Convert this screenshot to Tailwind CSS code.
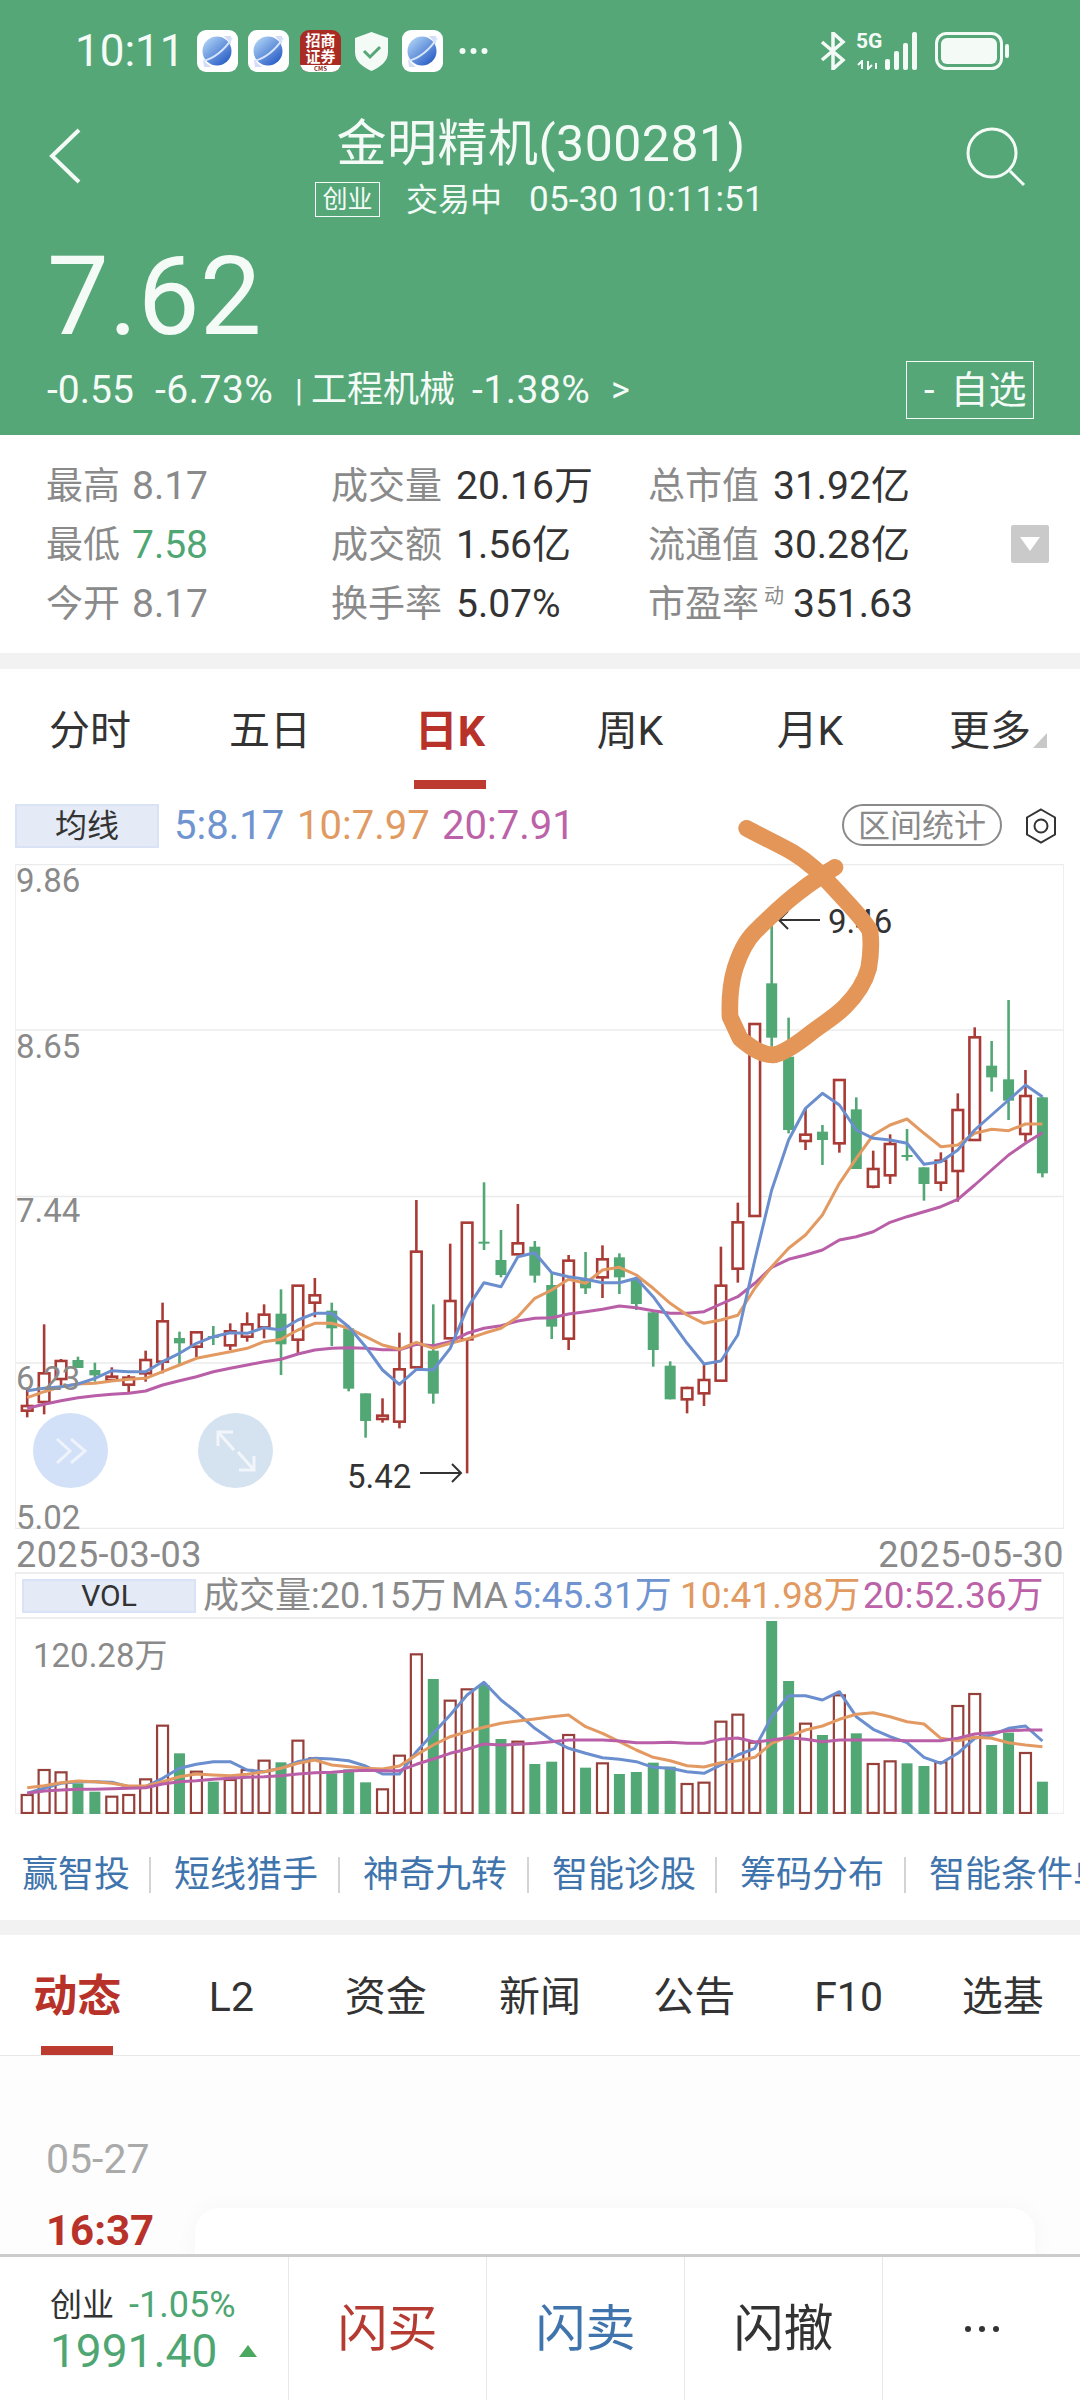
<!DOCTYPE html>
<html lang="zh">
<head>
    <meta charset="UTF-8">
    <title>金明精机(300281)</title>
    <script src="https://cdn.jsdelivr.net/npm/@tailwindcss/browser@4"></script>
</head>
<body class="relative w-[1080px] h-[2400px] overflow-hidden bg-white text-[#333333] font-['Roboto','Noto_Sans_CJK_SC',sans-serif]">

    <svg class="absolute w-0 h-0">
        <defs>
            <linearGradient id="planet" x1="0.15" y1="0.1" x2="0.85" y2="0.9">
                <stop offset="0" stop-color="#a8cdf3"/>
                <stop offset="1" stop-color="#2b5fc7"/>
            </linearGradient>
            <symbol id="browser" viewBox="0 0 41 42">
                <rect width="41" height="42" rx="9" fill="#ffffff"/>
                <path d="M27 6h7v8zM6 30l8 7h-7z" fill="#d5dcf8"/>
                <circle cx="20" cy="21" r="14.5" fill="url(#planet)"/>
                <path d="M6 31C16 29 28 20 35 8" fill="none" stroke="#d6e5fb" stroke-width="2"/>
            </symbol>
        </defs>
    </svg>

    <!-- header -->
    <header class="h-[435px] bg-[#55a778] text-[#f4fbf7]">
        <div class="h-[100px] flex items-center pl-[75px] pr-[71px] pt-[2px]">
            <span class="text-[44px] leading-none w-[122px]">10:11</span>
            <svg class="w-[41px] h-[42px]"><use href="#browser"/></svg>
            <svg class="w-[41px] h-[42px] ml-[10px]"><use href="#browser"/></svg>
            <div class="w-[41px] h-[42px] ml-[11px] rounded-[9px] overflow-hidden flex flex-col items-center bg-[#a92b22] font-['Noto_Sans_CJK_SC',serif] font-bold text-white">
                <div class="w-[32px] h-[35px] pt-[2px] text-center text-[15px] leading-[16px] break-all">招商证券</div>
                <div class="w-full h-[7px] bg-white text-[#8c2a22] text-[6px] leading-[7px] text-center">CMS</div>
            </div>
            <svg class="w-[33px] h-[39px] ml-[14px]" viewBox="0 0 33 39"><path d="M16.5 0L33 6v14c0 10-8 15-16.5 19C8 35 0 30 0 20V6z" fill="#f4fbf7"/><path d="M9 19l6 6 10-10" fill="none" stroke="#55a778" stroke-width="3"/></svg>
            <svg class="w-[41px] h-[42px] ml-[14px]"><use href="#browser"/></svg>
            <svg class="w-[29px] h-[8px] ml-[16px]" viewBox="0 0 29 8"><circle cx="3.5" cy="4" r="3" fill="#f4fbf7"/><circle cx="14.5" cy="4" r="3" fill="#f4fbf7"/><circle cx="25.5" cy="4" r="3" fill="#f4fbf7"/></svg>
            <svg class="w-[26px] h-[38px] ml-auto" viewBox="0 0 26 38"><path d="M2 10l21 18-10 9V1l10 9L2 28" fill="none" stroke="#f4fbf7" stroke-width="3.5"/></svg>
            <div class="relative w-[28px] h-[38px] ml-[10px] text-[21px] leading-[19px] font-bold">5G
                <svg class="absolute left-0 bottom-0 w-[26px] h-[10px]" viewBox="0 0 26 10"><path d="M6 9V1L2 5M12 1v8l4-4M20 3v6" fill="none" stroke="#f4fbf7" stroke-width="2"/></svg>
            </div>
            <svg class="w-[34px] h-[38px]" viewBox="0 0 34 38"><rect x="1" y="27" width="5" height="11" rx="2" fill="#f4fbf7"/><rect x="10" y="19" width="5" height="19" rx="2" fill="#f4fbf7"/><rect x="19" y="11" width="5" height="27" rx="2" fill="#f4fbf7"/><rect x="28" y="0" width="5" height="38" rx="2" fill="#f4fbf7"/></svg>
            <svg class="w-[74px] h-[38px] ml-[17px]" viewBox="0 0 74 38"><rect x="1.5" y="1.5" width="65" height="35" rx="10" fill="none" stroke="#f4fbf7" stroke-width="3"/><rect x="6" y="6" width="56" height="26" rx="6" fill="#f4fbf7"/><rect x="70" y="12" width="4" height="14" rx="2" fill="#f4fbf7"/></svg>
        </div>
        <div class="h-[82px] grid grid-cols-[1fr_auto_1fr] items-start pl-[48px] pr-[54px]">
            <svg class="w-[33px] h-[56px] mt-[28px]" viewBox="0 0 33 56"><path d="M31 2L4 28l27 26" fill="none" stroke="#f4fbf7" stroke-width="4"/></svg>
            <h1 class="mt-[14px] ml-[8px] text-[50px] leading-[60px] font-normal tracking-[0.5px]">金明精机(300281)</h1>
            <svg class="w-[60px] h-[60px] mt-[27px] justify-self-end" viewBox="0 0 60 60"><circle cx="26" cy="26" r="24" fill="none" stroke="#f4fbf7" stroke-width="3"/><path d="M44 44l14 14" stroke="#f4fbf7" stroke-width="3"/></svg>
        </div>
        <div class="h-[35px] flex items-center pl-[315px] text-[32px] leading-none">
            <span class="w-[65px] h-[35px] border border-[#f4fbf7] flex items-center justify-center text-[25px]">创业</span>
            <span class="ml-[26px]">交易中</span>
            <span class="ml-[27px] text-[35px] tracking-[0.2px]">05-30 10:11:51</span>
        </div>
        <div class="mt-[30px] h-[100px] pl-[47px] text-[110px] leading-[100px]">7.62</div>
        <div class="mt-[14px] h-[58px] flex items-center pl-[47px] pr-[46px] text-[39px] leading-none">
            <span class="w-[108px]">-0.55</span>
            <span class="w-[140px] tracking-[0.5px]">-6.73%</span>
            <span class="w-[16px] text-[32px]">|</span>
            <span class="w-[161px] text-[36px]">工程机械</span>
            <span class="w-[139px] tracking-[0.5px]">-1.38%</span>
            <span class="text-[36px]">&gt;</span>
            <span class="ml-auto w-[128px] h-[58px] border border-[#f4fbf7] flex items-center pl-[17px] text-[38px]"><span>-</span><span class="ml-[16px]">自选</span></span>
        </div>
    </header>

    <!-- quote stats -->
    <section class="h-[218px] flex items-start pt-[22px] pl-[46px] text-[37px] leading-[59px] text-[#8a8a8a]">
        <div class="grid grid-cols-[285px_317px_364px]">
            <div class="flex"><span class="w-[86px]">最高</span><span class="text-[39px]">8.17</span></div>
            <div class="flex"><span class="w-[125px]">成交量</span><span class="text-[39px] text-[#333333]">20.16万</span></div>
            <div class="flex"><span class="w-[125px]">总市值</span><span class="text-[39px] text-[#333333]">31.92亿</span></div>
            <div class="flex"><span class="w-[86px]">最低</span><span class="text-[39px] text-[#4ea673]">7.58</span></div>
            <div class="flex"><span class="w-[125px]">成交额</span><span class="text-[39px] text-[#333333]">1.56亿</span></div>
            <div class="flex"><span class="w-[125px]">流通值</span><span class="text-[39px] text-[#333333]">30.28亿</span></div>
            <div class="flex"><span class="w-[86px]">今开</span><span class="text-[39px]">8.17</span></div>
            <div class="flex"><span class="w-[125px]">换手率</span><span class="text-[39px] text-[#333333]">5.07%</span></div>
            <div class="flex"><span class="w-[125px] relative">市盈率<span class="absolute left-[116px] top-[-8px] text-[20px]">动</span></span><span class="ml-[20px] text-[39px] text-[#333333]">351.63</span></div>
        </div>
        <div class="mt-[68px] ml-[-1px] w-[38px] h-[38px] bg-[#cacaca] rounded-[2px] flex items-center justify-center">
            <svg class="w-[20px] h-[14px]" viewBox="0 0 20 14"><path d="M0 0h20L10 14z" fill="#ffffff"/></svg>
        </div>
    </section>
    <div class="h-[16px] bg-[#f2f2f2]"></div>

    <!-- period tabs -->
    <nav class="h-[120px] grid grid-cols-6 text-[41px] leading-[48px] text-center">
        <div class="pt-[38px]">分时</div>
        <div class="pt-[38px]">五日</div>
        <div class="pt-[38px] flex flex-col items-center font-bold text-[43px] text-[#b8322a]"><span>日K</span><span class="mt-[25px] w-[72px] h-[9px] bg-[#bc3a30]"></span></div>
        <div class="pt-[38px]">周K</div>
        <div class="pt-[38px]">月K</div>
        <div class="pt-[38px] relative">更多<span class="absolute right-[33px] top-[64px] w-0 h-0 border-l-[14px] border-l-transparent border-b-[15px] border-b-[#c8c8c8]"></span></div>
    </nav>

    <!-- MA legend -->
    <div class="h-[75px] pt-[15px] pl-[15px] pr-[23px] flex items-start">
        <div class="w-[144px] h-[44px] bg-[#e4eaf6] border-2 border-[#d9e3f5] text-[32px] leading-[40px] text-center">均线</div>
        <div class="ml-[15px] h-[44px] flex items-center text-[40px] leading-none">
            <span class="w-[123px] text-[#6f94d0]">5:8.17</span>
            <span class="w-[145px] text-[#e09a62]">10:7.97</span>
            <span class="text-[#bb62a8]">20:7.91</span>
        </div>
        <div class="ml-auto w-[160px] h-[42px] rounded-full border-2 border-[#8a8a8a] text-[#8a8a8a] text-[32px] leading-[41px] text-center">区间统计</div>
        <svg class="w-[32px] h-[36px] ml-[23px] mt-[4px]" viewBox="0 0 32 36"><path d="M16 1.5l14 8v17l-14 8-14-8v-17z" fill="none" stroke="#333333" stroke-width="2"/><circle cx="16" cy="18" r="6.5" fill="none" stroke="#333333" stroke-width="2"/></svg>
    </div>

    <!-- K-line chart -->
    <div class="relative h-[665px] text-[33px] leading-none text-[#8a8a8a]">
        <svg id="kchart" class="absolute inset-0 w-[1080px] h-[665px]" viewBox="0 864 1080 665"></svg>
        <span class="absolute left-[16px] top-[0px]">9.86</span>
        <span class="absolute left-[16px] top-[166px]">8.65</span>
        <span class="absolute left-[16px] top-[330px]">7.44</span>
        <span class="absolute left-[16px] top-[498px]">6.23</span>
        <span class="absolute left-[16px] top-[637px]">5.02</span>
        <span class="absolute left-[828px] top-[41px] text-[#333333]">9.46</span>
        <svg class="absolute left-[777px] top-[46px] w-[44px] h-[20px]" viewBox="0 0 44 20"><path d="M43 10H2M11 1l-9 9 9 9" fill="none" stroke="#333333" stroke-width="2"/></svg>
        <span class="absolute left-[347px] top-[596px] text-[#333333]">5.42</span>
        <svg class="absolute left-[419px] top-[599px] w-[44px] h-[20px]" viewBox="0 0 44 20"><path d="M1 10h41M33 1l9 9-9 9" fill="none" stroke="#333333" stroke-width="2"/></svg>
        <div class="absolute left-[33px] top-[549px] w-[75px] h-[75px] rounded-full bg-[#d2e0f8] flex items-center justify-center">
            <svg class="w-[32px] h-[26px]" viewBox="0 0 32 26"><path d="M2 1l13 12L2 25M16 1l14 12-14 12" fill="none" stroke="#eef3fc" stroke-width="3"/></svg>
        </div>
        <div class="absolute left-[198px] top-[549px] w-[75px] h-[75px] rounded-full bg-[#d5e3f1] flex items-center justify-center">
            <svg class="w-[40px] h-[42px]" viewBox="0 0 40 42"><path d="M2 16V2h15M2 2l16 18M38 26v14H23M38 40L22 22" fill="none" stroke="#f2f6fb" stroke-width="3"/></svg>
        </div>
    </div>

    <div class="h-[43px] pl-[16px] pr-[16px] flex justify-between items-start pt-[8px] text-[36px] leading-none tracking-[0.4px] text-[#8a8a8a]">
        <span>2025-03-03</span>
        <span>2025-05-30</span>
    </div>

    <!-- volume -->
    <div class="h-[47px] mx-[15px] w-[1049px] border-x border-t-2 border-b-2 border-[#eeeeee] flex items-center pl-[6px] text-[37px] leading-none text-[#8a8a8a]">
        <div class="w-[174px] h-[34px] bg-[#e4eaf6] border-2 border-[#d9e3f5] text-[30px] leading-[30px] text-[#333333] text-center">VOL</div>
        <span class="ml-[7px] w-[248px] whitespace-nowrap text-[36px]">成交量:20.15万</span>
        <span class="w-[61px]">MA</span>
        <span class="w-[168px] whitespace-nowrap text-[#6f94d0]">5:45.31万</span>
        <span class="w-[183px] whitespace-nowrap text-[#e09a62]">10:41.98万</span>
        <span class="whitespace-nowrap text-[#bb62a8]">20:52.36万</span>
    </div>
    <div class="relative h-[195px]">
        <svg id="volchart" class="absolute inset-0 w-[1080px] h-[195px]" viewBox="0 1619 1080 195"></svg>
        <span class="absolute left-[33px] top-[20px] text-[33px] leading-none text-[#8a8a8a]">120.28万</span>
    </div>

    <!-- tool links -->
    <div class="h-[106px] pt-[43px] pl-[22px] flex items-start whitespace-nowrap overflow-hidden text-[36px] leading-[36px] text-[#3f74ad]">
        <span class="w-[129px] h-[36px] shrink-0 border-r-2 border-[#d4d4d4] mr-[23px]">赢智投</span>
        <span class="w-[166px] h-[36px] shrink-0 border-r-2 border-[#d4d4d4] mr-[23px]">短线猎手</span>
        <span class="w-[166px] h-[36px] shrink-0 border-r-2 border-[#d4d4d4] mr-[23px]">神奇九转</span>
        <span class="w-[165px] h-[36px] shrink-0 border-r-2 border-[#d4d4d4] mr-[23px]">智能诊股</span>
        <span class="w-[166px] h-[36px] shrink-0 border-r-2 border-[#d4d4d4] mr-[23px]">筹码分布</span>
        <span class="shrink-0">智能条件单</span>
    </div>
    <div class="h-[15px] bg-[#f2f2f2]"></div>

    <!-- news tabs -->
    <nav class="h-[121px] grid grid-cols-7 border-b border-[#e8e8e8] text-[41px] leading-[48px] text-center">
        <div class="pt-[38px] flex flex-col items-center font-bold text-[44px] text-[#b8322a]"><span>动态</span><span class="mt-[25px] w-[72px] h-[9px] bg-[#bc3a30]"></span></div>
        <div class="pt-[38px]">L2</div>
        <div class="pt-[38px]">资金</div>
        <div class="pt-[38px]">新闻</div>
        <div class="pt-[38px]">公告</div>
        <div class="pt-[38px]">F10</div>
        <div class="pt-[38px]">选基</div>
    </nav>

    <!-- news feed -->
    <div class="h-[198px] overflow-hidden flex bg-[#fdfdfd]">
        <div class="w-[195px] pl-[46px] pt-[81px]">
            <div class="text-[41px] leading-[44px] text-[#aaaaaa]">05-27</div>
            <div class="mt-[28px] text-[42px] leading-[44px] font-bold text-[#b8322a]">16:37</div>
        </div>
        <div class="w-[840px] h-[120px] mt-[152px] bg-white rounded-t-[24px] shadow-[0_0_24px_rgba(0,0,0,0.03)]"></div>
    </div>

    <!-- bottom bar -->
    <footer class="h-[146px] grid grid-cols-[288px_198px_198px_198px_198px] border-t-[3px] border-[#cccccc]">
        <div class="pl-[50px] pt-[33px]">
            <div class="flex items-center h-[30px] text-[32px] leading-none">创业<span class="ml-[15px] text-[36px] text-[#4ea673]">-1.05%</span></div>
            <div class="mt-[8px] flex items-center h-[46px] text-[46px] leading-none text-[#4ea673]">1991.40
                <span class="ml-[22px] w-0 h-0 border-x-[9px] border-x-transparent border-b-[12px] border-b-[#4ca85f]"></span>
            </div>
        </div>
        <div class="border-l border-[#e8e8e8] flex items-center justify-center pt-[2px] text-[50px] text-[#b53a32]">闪买</div>
        <div class="border-l border-[#e8e8e8] flex items-center justify-center pt-[2px] text-[50px] text-[#3f74ad]">闪卖</div>
        <div class="border-l border-[#e8e8e8] flex items-center justify-center pt-[2px] text-[50px]">闪撤</div>
        <div class="border-l border-[#e8e8e8] flex items-center justify-center">
            <svg class="w-[36px] h-[8px]" viewBox="0 0 36 8"><circle cx="4" cy="4" r="3" fill="#333333"/><circle cx="18" cy="4" r="3" fill="#333333"/><circle cx="32" cy="4" r="3" fill="#333333"/></svg>
        </div>
    </footer>

    <!-- hand-drawn circle on top of the screenshot -->
    <svg class="absolute left-[680px] top-[800px] w-[240px] h-[280px] overflow-visible" viewBox="0 0 720 840">
        <path d="M200 85C250 112 300 135 340 158C385 185 425 222 465 268C505 312 545 350 570 392C575 430 572 470 566 505C555 545 530 585 495 620C465 650 430 670 395 697C360 725 320 755 285 764C250 768 215 745 180 715L150 650C148 600 150 555 165 505C180 460 195 425 225 395C265 355 310 310 365 270C395 245 430 225 465 202" fill="none" stroke="#e39657" stroke-width="50" stroke-linecap="round" stroke-linejoin="round"/>
    </svg>

    <script>
        const RED = '#a93b36', GREEN = '#52a874', BLUE = '#6b8fce', ORANGE = '#e39a62', PURPLE = '#b95fa8';
        const xAt = i => 27.2 + i * 16.92;

        // [type, wick top, body top, body bottom, wick bottom], y is (px - 1160) * 3
        const candles = [
            ['r',690,738,752,772],['r',493,640,726,763],['r',597,603,657,680],['g',590,600,624,624],['g',608,630,646,665],
            ['r',622,650,660,665],['r',645,653,674,697],['r',572,600,640,665],['r',428,484,605,640],['g',515,534,550,612],
            ['r',515,517,560,592],['g',498,528,532,555],['r',490,514,556,570],['r',457,493,530,545],['r',433,464,502,535],
            ['g',388,461,553,645],['r',377,377,539,580],['r',354,406,428,472],['g',428,452,505,558],['g',505,505,686,694],
            ['g',700,700,783,833],['r',715,767,777,788],['r',518,628,785,805],['r',120,275,622,622],['g',433,572,701,731],
            ['r',251,423,535,535],['r',188,188,538,940],['g',67,245,250,270],['g',210,300,345,352],['r',132,250,283,283],
            ['g',243,260,347,368],['g',340,375,500,537],['r',285,302,536,570],['g',276,360,385,402],['r',256,298,352,414],
            ['g',280,292,352,402],['g',355,355,432,450],['g',455,457,570,620],['g',604,617,718,718],['r',680,684,718,760],
            ['r',612,660,700,738],['r',260,377,662,662],['r',128,187,326,368],['r',-408,-408,168,168],['g',-720,-530,-367,-340],
            ['g',-427,-310,-90,-80],['r',-155,-76,-57,-30],['g',-105,-85,-60,15],['r',-240,-240,-50,-22],['g',-188,-152,27,27],
            ['r',-28,27,80,85],['r',-77,-48,46,72],['g',-93,-15,-10,2],['g',22,22,72,122],['r',-23,2,68,93],
            ['r',-200,-150,33,125],['r',-398,-368,-60,-60],['g',-357,-283,-248,-205],['g',-480,-242,-178,-120],['r',-270,-192,-78,-55],
            ['g',-190,-188,40,52]
        ];
        const kBlue = [692,685,680,672,655,632,635,635,605,580,550,530,518,520,503,510,480,460,460,500,560,630,673,628,630,565,445,368,380,290,278,338,350,358,368,368,355,410,480,550,612,603,525,300,90,-60,-155,-200,-165,-90,-65,-60,-50,13,5,-30,-90,-135,-180,-225,-190];
        const kOrange = [713,695,680,672,670,663,658,655,635,615,595,585,575,565,545,538,510,490,490,505,530,555,568,547,565,550,537,520,505,470,415,390,358,370,330,322,345,385,430,465,490,480,466,385,320,265,225,165,70,-5,-75,-105,-123,-80,-40,-45,-80,-92,-88,-108,-108];
        const kPurple = [745,733,722,713,707,703,700,693,675,662,650,635,625,615,605,598,582,570,565,563,565,569,569,553,557,545,520,505,497,483,475,473,462,455,448,438,443,452,460,460,455,432,410,370,322,298,285,270,240,230,215,187,170,155,140,118,75,30,-15,-50,-82];

        // bar tops and lines, y is (px - 1520) * 3
        const volTops = [825,750,757,790,815,830,825,778,617,700,755,785,780,750,722,727,662,715,760,748,787,808,707,403,477,542,508,495,657,665,732,725,645,743,730,762,756,728,740,792,788,605,584,668,303,483,611,645,526,640,732,724,730,738,727,558,522,675,638,699,785];
        const vBlue = [820,805,790,785,785,787,800,800,775,745,733,725,725,750,755,745,725,715,717,722,738,762,762,695,640,585,525,487,540,580,625,660,685,700,713,718,725,742,745,755,760,735,705,685,590,527,527,540,515,590,628,650,668,712,730,700,655,645,625,618,663];
        const vOrange = [803,797,788,783,785,790,798,798,785,770,762,765,767,763,755,745,730,720,735,740,745,747,738,705,675,650,635,622,610,603,597,590,585,620,640,665,690,712,722,737,741,728,722,712,670,650,630,618,598,583,578,590,605,612,655,662,652,655,668,675,680];
        const vPurple = [820,813,810,808,808,806,805,803,792,785,782,778,775,772,770,767,762,758,757,753,751,752,752,733,717,700,688,672,675,673,670,665,660,660,660,663,668,668,667,670,670,658,654,666,660,653,658,665,660,660,660,660,662,662,662,655,642,638,632,630,630];

        const kY = z => 1160 + z / 3;
        const vY = z => 1520 + z / 3;
        const hLine = (y, x1, x2, c) => `<line x1="${x1}" y1="${y}" x2="${x2}" y2="${y}" stroke="${c}" stroke-width="1.5"/>`;
        const vLine = (x, y1, y2, c, w) => `<line x1="${x}" y1="${y1}" x2="${x}" y2="${y2}" stroke="${c}" stroke-width="${w}"/>`;
        const maLine = (data, toY, c) => `<polyline fill="none" stroke="${c}" stroke-width="3" stroke-linejoin="round" points="${data.map((z, i) => xAt(i).toFixed(1) + ',' + toY(z).toFixed(1)).join(' ')}"/>`;

        let k = '';
        [864.5, 1030, 1196.5, 1363, 1528.5].forEach(y => { k += hLine(y, 15, 1064, '#ebebeb'); });
        k += vLine(15.5, 864, 1529, '#eeeeee', 1) + vLine(1063.5, 864, 1529, '#eeeeee', 1);
        candles.forEach((c, i) => {
            const x = xAt(i), col = c[0] === 'r' ? RED : GREEN;
            k += vLine(x, kY(c[1]), kY(c[4]), col, 2.6);
            if (c[0] === 'r') {
                k += `<rect x="${x - 5.3}" y="${kY(c[2])}" width="10.6" height="${Math.max((c[3] - c[2]) / 3, 2)}" fill="#ffffff" stroke="${RED}" stroke-width="2.6"/>`;
            } else {
                k += `<rect x="${x - 5.5}" y="${kY(c[2])}" width="11" height="${Math.max((c[3] - c[2]) / 3, 2)}" fill="${GREEN}"/>`;
            }
        });
        k += maLine(kPurple, kY, PURPLE) + maLine(kOrange, kY, ORANGE) + maLine(kBlue, kY, BLUE);
        document.getElementById('kchart').innerHTML = k;

        let v = hLine(1813.5, 15, 1064, '#eeeeee') + vLine(15.5, 1619, 1814, '#eeeeee', 1) + vLine(1063.5, 1619, 1814, '#eeeeee', 1);
        volTops.forEach((z, i) => {
            const x = xAt(i), top = vY(z), h = 1814 - top;
            v += candles[i][0] === 'r'
                ? `<rect x="${x - 5.5}" y="${top}" width="11" height="${h - 1}" fill="#ffffff" stroke="#96403b" stroke-width="2.2"/>`
                : `<rect x="${x - 5.5}" y="${top}" width="11" height="${h}" fill="${GREEN}"/>`;
        });
        v += maLine(vBlue, vY, BLUE) + maLine(vOrange, vY, ORANGE) + maLine(vPurple, vY, PURPLE);
        document.getElementById('volchart').innerHTML = v;
    </script>
</body>
</html>
